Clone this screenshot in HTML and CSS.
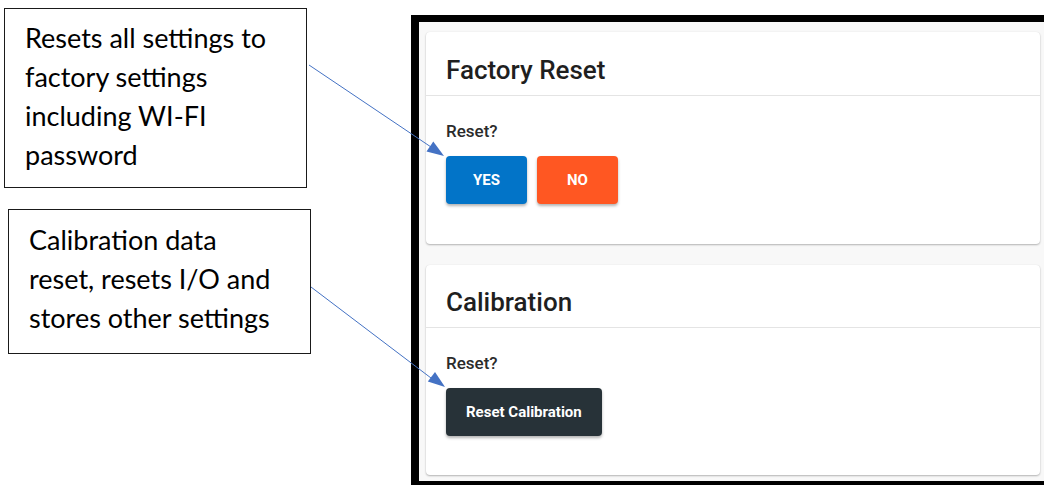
FILE: index.html
```html
<!DOCTYPE html>
<html>
<head>
<meta charset="utf-8">
<link rel="stylesheet" href="styles.css">
</head>
<body>
<div class="page">
  <div class="notes">
    <div class="callout callout-factory">Resets all settings to<br>factory settings<br>including WI-FI<br>password</div>
    <div class="callout callout-calib">Calibration data<br>reset, resets I/O and<br>stores other settings</div>
  </div>
  <div class="frame">
    <section class="card card-factory">
      <header class="card-head"><h2 class="card-title">Factory Reset</h2></header>
      <div class="card-body">
        <p class="label">Reset?</p>
        <div class="actions">
          <button class="btn btn-yes">YES</button>
          <button class="btn btn-no">NO</button>
        </div>
      </div>
    </section>
    <section class="card card-calib">
      <header class="card-head"><h2 class="card-title">Calibration</h2></header>
      <div class="card-body">
        <p class="label">Reset?</p>
        <div class="actions">
          <button class="btn btn-dark">Reset Calibration</button>
        </div>
      </div>
    </section>
  </div>
</div>
<svg class="arrows" width="1044" height="485" viewBox="0 0 1044 485">
  <line x1="309" y1="65" x2="431" y2="147" stroke="#4472c4" stroke-width="1"/>
  <polygon points="444,156 426.5,151.5 433.3,141.5" fill="#4472c4"/>
  <line x1="311" y1="287" x2="431" y2="378" stroke="#4472c4" stroke-width="1"/>
  <polygon points="445,387 427.8,381.6 435,372" fill="#4472c4"/>
</svg>
</body>
</html>
```
FILE: styles.css
```css
html, body {
  margin: 0;
  padding: 0;
  background: #ffffff;
}
body {
  width: 1044px;
  height: 485px;
  overflow: hidden;
  position: relative;
}
.page {
  display: flex;
  align-items: flex-start;
  width: 1044px;
  height: 485px;
}
.notes {
  flex: 0 0 411px;
  display: flex;
  flex-direction: column;
}
.callout {
  box-sizing: border-box;
  width: 303px;
  border: 1px solid #1a1a1a;
  font-family: "Lato", "Open Sans", sans-serif;
  font-size: 27px;
  line-height: 39px;
  color: #000;
  padding-left: 20px;
}
.callout-factory {
  margin: 8px 0 0 4px;
  height: 180px;
  padding-top: 9px;
}
.callout-calib {
  margin: 21px 0 0 8px;
  height: 145px;
  padding-top: 10px;
}
.frame {
  flex: none;
  margin-top: 15px;
  border-left: 8px solid #000;
  border-top: 7px solid #000;
  border-bottom: 8px solid #000;
  background: #f8f8f8;
  padding: 10px 7px 6px;
  display: flex;
  flex-direction: column;
  gap: 21px;
}
.card {
  width: 614px;
  background: #fff;
  border-radius: 4px;
  box-shadow: 0 1px 2px rgba(0,0,0,0.28), 0 0 1px rgba(0,0,0,0.08);
  font-family: "Roboto", sans-serif;
}
.card-head {
  border-bottom: 1px solid #e4e4e4;
  padding: 22px 20px 9px;
}
.card-calib .card-head {
  padding-top: 21px;
}
.card-title {
  margin: 0;
  font-size: 26px;
  line-height: 32px;
  font-weight: 500;
  color: #1f1f1f;
}
.card-body {
  padding: 25px 20px 40px;
}
.card-calib .card-body {
  padding-bottom: 39px;
}
.label {
  margin: 0 0 14px;
  font-size: 17px;
  line-height: 21px;
  font-weight: 500;
  color: #2b2b2b;
}
.actions {
  display: flex;
  gap: 10px;
}
.btn {
  height: 48px;
  min-width: 81px;
  padding: 0 20px;
  border: none;
  border-radius: 4px;
  font-family: "Roboto", sans-serif;
  font-size: 15px;
  font-weight: 700;
  color: #fff;
  box-shadow: 0 2px 3px rgba(0,0,0,0.3);
}
.btn-yes { background: #0274c8; }
.btn-no { background: #ff5722; }
.btn-dark { background: #273238; }
.arrows {
  position: absolute;
  left: 0;
  top: 0;
  pointer-events: none;
}
```
